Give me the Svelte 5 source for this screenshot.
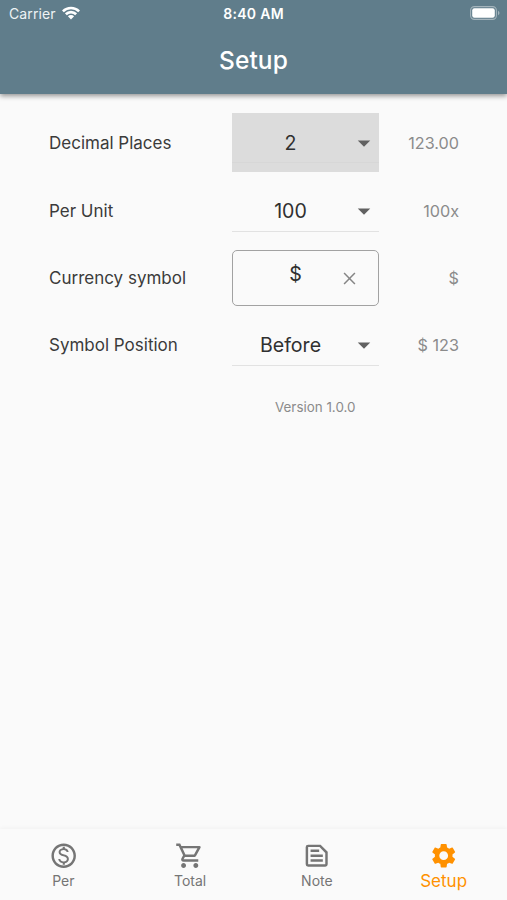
<script lang="ts">
  let decimals = '2';
  let perUnit = '100';
  let symbol = '$';
  let position = 'Before';
  let active = 'Setup';

  const tabs = [
    {
      name: 'Per',
      path: 'M12 2C6.48 2 2 6.48 2 12s4.48 10 10 10 10-4.48 10-10S17.52 2 12 2zm0 18c-4.41 0-8-3.59-8-8s3.59-8 8-8 8 3.59 8 8-3.59 8-8 8zm.49-8.9c-2.1-.6-3.05-1-3.05-2.1 0-1.15 1.1-1.75 2.5-1.75 1.5 0 2.3.8 2.45 1.75h1.65c-.15-1.6-1.25-2.7-3.1-3.05V4.6h-1.75v1.3c-1.95.3-3.35 1.4-3.35 3.1 0 2.1 1.7 2.9 3.95 3.5 2.1.55 2.8 1.2 2.8 2.2 0 1-.85 1.95-2.6 1.95-1.7 0-2.65-.85-2.8-2.05H7.55c.15 1.95 1.6 3.1 3.64 3.45v1.35h1.75v-1.3c1.95-.3 3.3-1.55 3.3-3.4 0-2.3-1.75-3.05-3.75-3.6z'
    },
    {
      name: 'Total',
      path: 'M15.55 13c.75 0 1.41-.41 1.75-1.03l3.58-6.49c.37-.66-.11-1.48-.87-1.48H5.21l-.94-2H1v2h2l3.6 7.59-1.35 2.44C4.52 15.37 5.48 17 7 17h12v-2H7l1.1-2h7.45zM6.16 6h12.15l-2.76 5H8.53L6.16 6zM7 18c-1.1 0-1.99.9-1.99 2S5.9 22 7 22s2-.9 2-2-.9-2-2-2zm10 0c-1.1 0-1.99.9-1.99 2s.89 2 1.99 2 2-.9 2-2-.9-2-2-2z'
    },
    {
      name: 'Note',
      path: 'M5 3h10.2L21 8.8V19a2 2 0 0 1-2 2H5a2 2 0 0 1-2-2V5a2 2 0 0 1 2-2zm0 2v14h14V9.7L14.3 5zM7 7h7v2H7zM7 11h10v2H7zM7 15h10v2H7z'
    },
    {
      name: 'Setup',
      path: 'M19.14 12.94c.04-.3.06-.61.06-.94 0-.32-.02-.64-.07-.94l2.03-1.58c.18-.14.23-.41.12-.61l-1.92-3.32c-.12-.22-.37-.29-.59-.22l-2.39.96c-.5-.38-1.03-.7-1.62-.94l-.36-2.54c-.04-.24-.24-.41-.48-.41h-3.84c-.24 0-.43.17-.47.41l-.36 2.54c-.59.24-1.13.57-1.62.94l-2.39-.96c-.22-.08-.47 0-.59.22L2.74 8.87c-.12.21-.08.47.12.61l2.03 1.58c-.05.3-.09.63-.09.94s.02.64.07.94l-2.03 1.58c-.18.14-.23.41-.12.61l1.92 3.32c.12.22.37.29.59.22l2.39-.96c.5.38 1.03.7 1.62.94l.36 2.54c.05.24.24.41.48.41h3.84c.24 0 .44-.17.47-.41l.36-2.54c.59-.24 1.13-.56 1.62-.94l2.39.96c.22.08.47 0 .59-.22l1.92-3.32c.12-.22.07-.47-.12-.61l-2.01-1.58zM12 15.6c-1.98 0-3.6-1.62-3.6-3.6s1.62-3.6 3.6-3.6 3.6 1.62 3.6 3.6-1.62 3.6-3.6 3.6z'
    }
  ];
</script>

<div class="screen">
  <header>
    <div class="status">
      <div class="carrier">
        <span>Carrier</span>
        <svg class="wifi" viewBox="0 0 18 14">
          <path d="M0 4.4a12.8 12.8 0 0 1 18 0L16.2 6.2a10.2 10.2 0 0 0-14.4 0z" />
          <path d="M2.9 7.3a8.6 8.6 0 0 1 12.2 0l-1.9 1.9a6 6 0 0 0-8.4 0z" />
          <path d="M5.9 10.3a4.4 4.4 0 0 1 6.2 0L9 13.6z" />
        </svg>
      </div>
      <span class="time">8:40 AM</span>
      <svg class="battery" viewBox="0 0 30 14">
        <rect x="0.6" y="0.6" width="25.8" height="12.8" rx="3.8" />
        <rect class="charge" x="2.2" y="2.2" width="22.6" height="9.6" rx="2.2" />
        <path class="charge tip" d="M28 4.8c2 .8 2 3.6 0 4.4z" />
      </svg>
    </div>
    <h1>Setup</h1>
  </header>

  <main>
    <div class="row">
      <span class="label">Decimal Places</span>
      <button class="select focused">
        <span class="value">{decimals}</span>
        <svg viewBox="0 0 24 24"><path d="M7 10l5 5 5-5z" /></svg>
      </button>
      <span class="sample">123.00</span>
    </div>

    <div class="row">
      <span class="label">Per Unit</span>
      <button class="select">
        <span class="value">{perUnit}</span>
        <svg viewBox="0 0 24 24"><path d="M7 10l5 5 5-5z" /></svg>
      </button>
      <span class="sample">{perUnit}x</span>
    </div>

    <div class="row">
      <span class="label">Currency symbol</span>
      <div class="field">
        <span class="symbol">{symbol}</span>
        <button class="clear" aria-label="Clear" on:click={() => (symbol = '')}>
          <svg viewBox="0 0 12 12"><path d="M1 1l10 10M11 1L1 11" /></svg>
        </button>
      </div>
      <span class="sample">{symbol}</span>
    </div>

    <div class="row">
      <span class="label">Symbol Position</span>
      <button class="select">
        <span class="value">{position}</span>
        <svg viewBox="0 0 24 24"><path d="M7 10l5 5 5-5z" /></svg>
      </button>
      <span class="sample">{symbol} 123</span>
    </div>

    <p class="version">Version 1.0.0</p>
  </main>

  <nav>
    {#each tabs as tab}
      <button class="tab" class:active={active === tab.name} on:click={() => (active = tab.name)}>
        <svg viewBox="0 0 24 24">
          <path fill-rule="evenodd" d={tab.path} />
        </svg>
        <span>{tab.name}</span>
      </button>
    {/each}
  </nav>
</div>

<style>
  :global(body) {
    margin: 0;
  }

  .screen {
    display: flex;
    flex-direction: column;
    height: 100vh;
    background: #fafafa;
    color: #3b3b3b;
    font-family: Inter, Roboto, sans-serif;
  }

  button {
    padding: 0;
    border: none;
    background: none;
    color: inherit;
    font-family: inherit;
    cursor: pointer;
  }

  header {
    height: 94px;
    flex: none;
    background: #607d8b;
    color: #fff;
    box-shadow: 0 2px 5px rgba(0, 0, 0, 0.42);
  }

  .status {
    display: grid;
    grid-template-columns: 1fr auto 1fr;
    align-items: center;
    height: 27px;
    padding: 0 7px 0 9px;
    font-size: 14px;
  }

  .carrier {
    display: flex;
    align-items: center;
    gap: 6px;
    letter-spacing: 0.1px;
    color: #eef3f5;
  }

  .wifi {
    width: 18px;
    height: 14px;
    margin-top: -2px;
    fill: #fff;
  }

  .time {
    margin-left: -2px;
    font-size: 14px;
    font-weight: 600;
    letter-spacing: 0.3px;
  }

  .battery {
    justify-self: end;
    width: 30px;
    height: 14px;
    margin-top: -2px;
    fill: none;
    stroke: #a4b4bc;
    stroke-width: 1.1;
  }

  .charge {
    fill: #fff;
    stroke: none;
  }

  .tip {
    fill: #a4b4bc;
  }

  h1 {
    margin: 0;
    line-height: 66px;
    text-align: center;
    font-size: 24.5px;
    font-weight: 500;
    letter-spacing: 0.1px;
  }

  main {
    display: flex;
    flex-direction: column;
    flex: 1;
    gap: 9.5px;
    padding: 19px 48px 0 49px;
  }

  .row {
    display: grid;
    grid-template-columns: 183px 147px 1fr;
    align-items: center;
  }

  .label {
    font-size: 17px;
  }

  .sample {
    text-align: right;
    font-size: 16.2px;
    color: #8b8b8b;
  }

  .select {
    position: relative;
    display: flex;
    align-items: center;
    height: 59px;
    font-size: 19.6px;
    color: #303030;
  }

  .select::after {
    content: '';
    position: absolute;
    right: 0;
    bottom: 9px;
    left: 0;
    height: 1px;
    background: #e2e2e2;
  }

  .select.focused {
    background: #dcdcdc;
  }

  .select.focused::after {
    background: #d7d7d7;
  }

  .value {
    flex: 1;
  }

  .select svg {
    width: 30px;
    height: 30px;
    fill: #616161;
  }

  .field {
    display: flex;
    box-sizing: border-box;
    height: 56px;
    border: 1.5px solid #a2a2a2;
    border-radius: 5px;
    font-size: 19.6px;
    color: #303030;
  }

  .symbol {
    flex: 1;
    padding-left: 26px;
    line-height: 46px;
    text-align: center;
  }

  .clear {
    display: grid;
    place-items: center;
    width: 35px;
    margin-right: 11px;
  }

  .clear svg {
    width: 13px;
    height: 13px;
    margin-top: 1px;
    fill: none;
    stroke: #858585;
    stroke-width: 1.4;
  }

  .version {
    margin: 12.5px 0 0 226px;
    line-height: 20px;
    font-size: 13.4px;
    color: #8b8b8b;
  }

  nav {
    display: grid;
    grid-template-columns: repeat(4, 1fr);
    height: 71px;
    flex: none;
    box-shadow: 0 -1px 4px rgba(0, 0, 0, 0.04);
  }

  .tab {
    display: flex;
    flex-direction: column;
    align-items: center;
    padding-top: 12px;
    font-size: 14px;
    color: #757575;
  }

  .tab svg {
    width: 29.4px;
    height: 29.4px;
    fill: currentColor;
  }

  .tab span {
    line-height: 22px;
  }

  .tab.active {
    font-size: 17px;
    color: #ff9100;
  }
</style>
